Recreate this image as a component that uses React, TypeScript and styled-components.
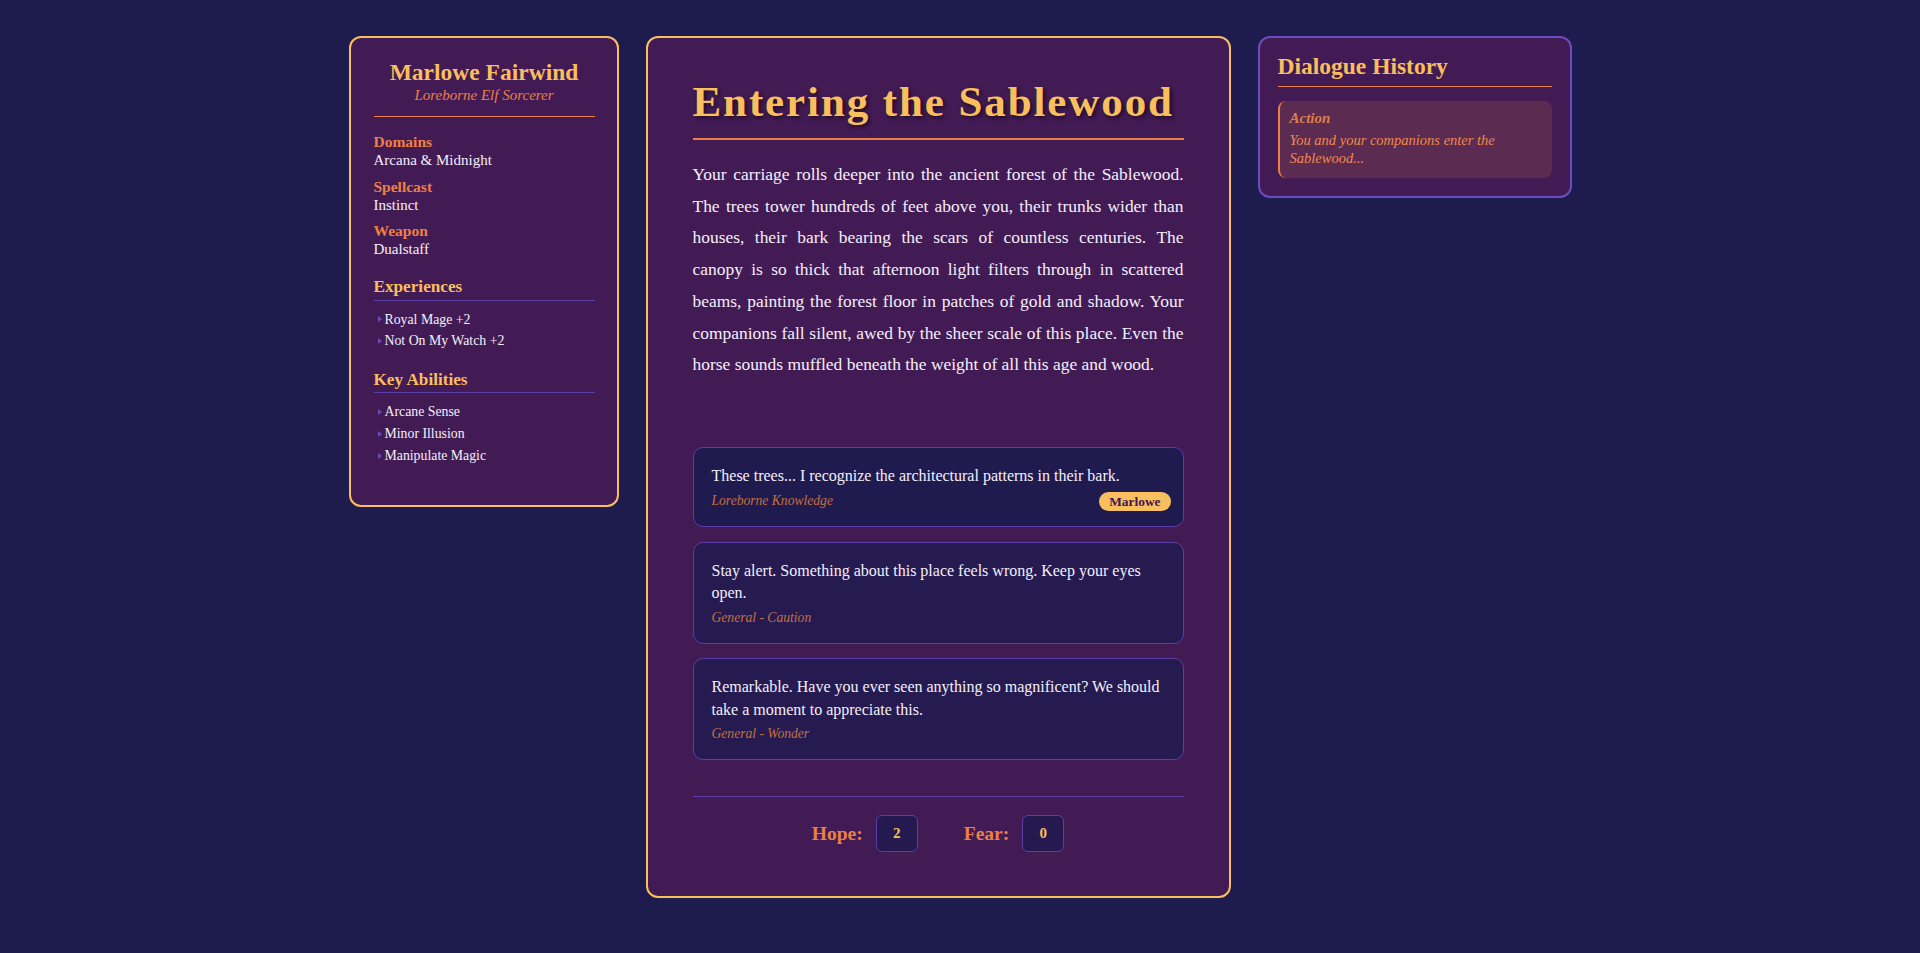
import React from "react";
import styled, { createGlobalStyle } from "styled-components";

const GOLD = "#f9bf5e";
const ORANGE = "#ec8044";
const PURPLE_LINE = "#5a3ea8";
const PANEL_BG = "#431b54";
const PAGE_BG = "#1e1b4e";
const TEXT = "#f4effb";

const GlobalStyle = createGlobalStyle`
  html, body {
    margin: 0;
    padding: 0;
    background: ${PAGE_BG};
  }
  body {
    font-family: "Liberation Serif", "DejaVu Serif", serif;
    color: ${TEXT};
  }
  * { box-sizing: border-box; }
`;

const Layout = styled.div`
  display: flex;
  justify-content: center;
  align-items: flex-start;
  gap: 27px;
  padding: 36px 0;
  min-height: 100vh;
`;

/* ---------- Character sheet ---------- */
const Sheet = styled.aside`
  width: 270px;
  background: ${PANEL_BG};
  border: 2px solid ${GOLD};
  border-radius: 12px;
  padding: 20px 22px 38px 23px;
`;

const SheetHeader = styled.header`
  text-align: center;
  padding-bottom: 12px;
  border-bottom: 1px solid ${ORANGE};
  margin-bottom: 15px;
`;

const Name = styled.h2`
  margin: 0;
  font-size: 23.5px;
  line-height: 28px;
  font-weight: 700;
  color: ${GOLD};
`;

const Lineage = styled.div`
  font-size: 15px;
  line-height: 18px;
  font-style: italic;
  color: ${ORANGE};
`;

const Stats = styled.div`
  display: flex;
  flex-direction: column;
  gap: 6.5px;
`;

const Stat = styled.div`
  display: flex;
  flex-direction: column;
`;

const StatLabel = styled.span`
  font-size: 15.5px;
  line-height: 19px;
  font-weight: 700;
  color: ${ORANGE};
`;

const StatValue = styled.span`
  font-size: 15px;
  line-height: 19px;
  color: ${TEXT};
`;

const Section = styled.section`
  margin-top: 17px;
`;

const SectionTitle = styled.h3`
  margin: 0;
  font-size: 17.2px;
  line-height: 21px;
  font-weight: 700;
  color: ${GOLD};
  padding-bottom: 2.5px;
  border-bottom: 1px solid ${PURPLE_LINE};
`;

const List = styled.ul`
  list-style: none;
  margin: 8px 0 0;
  padding: 0;
`;

const ListItem = styled.li`
  display: flex;
  align-items: center;
  gap: 3px;
  font-size: 13.8px;
  line-height: 21.7px;
  color: ${TEXT};

  &::before {
    content: "";
    margin-left: 4px;
    width: 0;
    height: 0;
    border-left: 4px solid #6a4cb8;
    border-top: 3px solid transparent;
    border-bottom: 3px solid transparent;
  }
`;

/* ---------- Scene ---------- */
const Stage = styled.main`
  width: 585px;
  background: ${PANEL_BG};
  border: 2px solid ${GOLD};
  border-radius: 12px;
  padding: 40px 45px 44px;
`;

const SceneTitle = styled.h1`
  margin: 0 0 19px;
  font-size: 43px;
  line-height: 48px;
  letter-spacing: 1.9px;
  font-weight: 700;
  color: ${GOLD};
  text-shadow: 2px 2px 4px rgba(0, 0, 0, 0.6);
  padding-bottom: 12px;
  border-bottom: 2px solid ${ORANGE};
`;

const Narration = styled.p`
  margin: 0;
  font-size: 17.45px;
  line-height: 31.7px;
  text-align: justify;
  color: ${TEXT};
`;

const Choices = styled.div`
  margin-top: 66px;
  display: flex;
  flex-direction: column;
  gap: 14.5px;
`;

const Choice = styled.div<{ $active?: boolean }>`
  background: ${(p) => (p.$active ? "#1f1b4f" : "#251b51")};
  border: 1px solid ${PURPLE_LINE};
  border-radius: 10px;
  padding: 17px 12px 15.5px 18px;
`;

const ChoiceText = styled.div`
  font-size: 16px;
  line-height: 22.7px;
  color: ${TEXT};
`;

const ChoiceMeta = styled.div`
  margin-top: 4px;
  display: flex;
  justify-content: space-between;
  align-items: center;
`;

const Tag = styled.span`
  font-size: 13.6px;
  line-height: 18px;
  font-style: italic;
  color: #c4703f;
`;

const Badge = styled.span`
  background: ${GOLD};
  color: #3e1650;
  font-size: 13.4px;
  font-weight: 700;
  line-height: 19px;
  padding: 0 10px;
  border-radius: 10px;
`;

const Footer = styled.footer`
  margin-top: 36.5px;
  border-top: 1px solid ${PURPLE_LINE};
  padding-top: 18px;
  display: flex;
  justify-content: center;
  gap: 46px;
`;

const Meter = styled.div`
  display: flex;
  align-items: center;
  gap: 13px;
`;

const MeterLabel = styled.span`
  font-size: 19.5px;
  font-weight: 700;
  color: ${ORANGE};
`;

const MeterValue = styled.span`
  width: 42px;
  height: 37px;
  display: flex;
  align-items: center;
  justify-content: center;
  background: #251a50;
  border: 1px solid ${PURPLE_LINE};
  border-radius: 6px;
  font-size: 15px;
  font-weight: 700;
  color: ${GOLD};
`;

/* ---------- History ---------- */
const History = styled.aside`
  width: 314px;
  background: ${PANEL_BG};
  border: 2px solid #6a4cc0;
  border-radius: 12px;
  padding: 15px 18px 18px;
`;

const HistoryTitle = styled.h2`
  margin: 0;
  font-size: 23.5px;
  line-height: 27px;
  font-weight: 700;
  color: ${GOLD};
  padding-bottom: 6px;
  border-bottom: 1px solid ${ORANGE};
`;

const Entry = styled.div`
  margin-top: 14px;
  background: #5b2b51;
  border-left: 2px solid ${ORANGE};
  border-radius: 8px;
  padding: 8px 10px 11px 10px;
`;

const EntryType = styled.div`
  font-size: 15px;
  line-height: 18px;
  font-weight: 700;
  font-style: italic;
  color: #dc7f48;
`;

const EntryText = styled.div`
  margin-top: 3.5px;
  font-size: 14.5px;
  line-height: 18.3px;
  font-style: italic;
  color: #f08a4c;
`;

const stats = [
  { label: "Domains", value: "Arcana & Midnight" },
  { label: "Spellcast", value: "Instinct" },
  { label: "Weapon", value: "Dualstaff" },
];

const experiences = ["Royal Mage +2", "Not On My Watch +2"];
const abilities = ["Arcane Sense", "Minor Illusion", "Manipulate Magic"];

const choices = [
  {
    text: "These trees... I recognize the architectural patterns in their bark.",
    tag: "Loreborne Knowledge",
    badge: "Marlowe",
  },
  {
    text: "Stay alert. Something about this place feels wrong. Keep your eyes open.",
    tag: "General - Caution",
  },
  {
    text: "Remarkable. Have you ever seen anything so magnificent? We should take a moment to appreciate this.",
    tag: "General - Wonder",
  },
];

const narration =
  "Your carriage rolls deeper into the ancient forest of the Sablewood. The trees tower hundreds of feet above you, their trunks wider than houses, their bark bearing the scars of countless centuries. The canopy\u00a0is so thick that afternoon light filters through in scattered beams, painting the forest floor in patches of gold and shadow. Your companions fall silent, awed by the sheer scale of this place. Even the horse sounds muffled beneath the weight of all this age and wood.";

export default function App() {
  return (
    <>
      <GlobalStyle />
      <Layout>
        <Sheet>
          <SheetHeader>
            <Name>Marlowe Fairwind</Name>
            <Lineage>Loreborne Elf Sorcerer</Lineage>
          </SheetHeader>
          <Stats>
            {stats.map((s) => (
              <Stat key={s.label}>
                <StatLabel>{s.label}</StatLabel>
                <StatValue>{s.value}</StatValue>
              </Stat>
            ))}
          </Stats>
          <Section>
            <SectionTitle>Experiences</SectionTitle>
            <List>
              {experiences.map((e) => (
                <ListItem key={e}>{e}</ListItem>
              ))}
            </List>
          </Section>
          <Section>
            <SectionTitle>Key Abilities</SectionTitle>
            <List>
              {abilities.map((a) => (
                <ListItem key={a}>{a}</ListItem>
              ))}
            </List>
          </Section>
        </Sheet>

        <Stage>
          <SceneTitle>Entering the Sablewood</SceneTitle>
          <Narration>{narration}</Narration>
          <Choices>
            {choices.map((c, i) => (
              <Choice key={i} $active={i === 0}>
                <ChoiceText>{c.text}</ChoiceText>
                <ChoiceMeta>
                  <Tag>{c.tag}</Tag>
                  {c.badge && <Badge>{c.badge}</Badge>}
                </ChoiceMeta>
              </Choice>
            ))}
          </Choices>
          <Footer>
            <Meter>
              <MeterLabel>Hope:</MeterLabel>
              <MeterValue>2</MeterValue>
            </Meter>
            <Meter>
              <MeterLabel>Fear:</MeterLabel>
              <MeterValue>0</MeterValue>
            </Meter>
          </Footer>
        </Stage>

        <History>
          <HistoryTitle>Dialogue History</HistoryTitle>
          <Entry>
            <EntryType>Action</EntryType>
            <EntryText>You and your companions enter the Sablewood...</EntryText>
          </Entry>
        </History>
      </Layout>
    </>
  );
}
